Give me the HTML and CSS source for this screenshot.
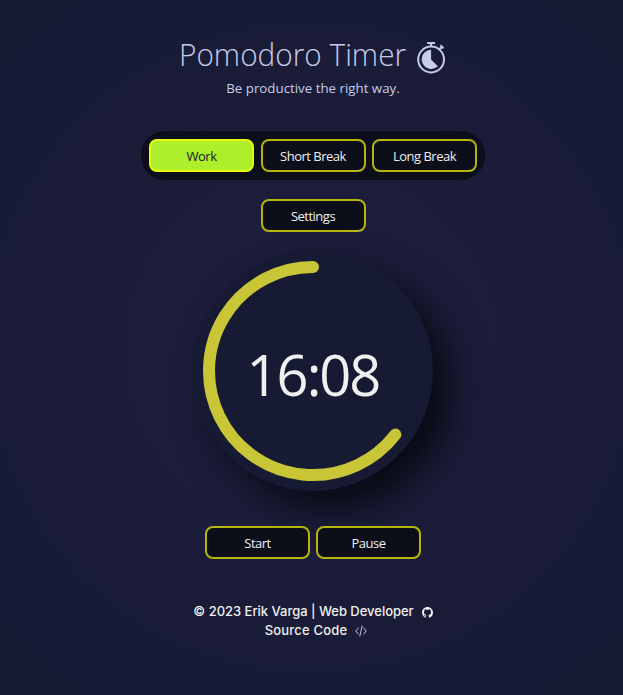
FILE: index.html
```html
<!DOCTYPE html>
<html lang="en">
<head>
<meta charset="utf-8">
<title>Pomodoro Timer</title>
<link rel="stylesheet" href="styles.css">
</head>
<body>
<main class="app">
  <header class="header">
    <h1 class="title"><span class="title-text">Pomodoro Timer</span>
      <svg class="stopwatch" width="29" height="33" viewBox="0 0 29 33">
        <circle cx="14.1" cy="18.5" r="12.9" fill="none" stroke="currentColor" stroke-width="2"/>
        <path d="M14.1 18.5V8.7A9.6 9.6 0 1 0 20.9 25.3Z" fill="currentColor"/>
        <path d="M10.2 2h7.8M14.1 2v4M22.6 8.3l2.5-2.5M23.4 4.2l3 3" fill="none" stroke="currentColor" stroke-width="2"/>
      </svg>
    </h1>
    <p class="subtitle">Be productive the right way.</p>
  </header>
  <nav class="modes">
    <button class="btn active">Work</button>
    <button class="btn">Short Break</button>
    <button class="btn">Long Break</button>
  </nav>
  <button class="btn settings">Settings</button>
  <section class="dial">
    <svg class="ring" width="240" height="240" viewBox="0 0 240 240">
      <path d="M120 16A104 104 0 1 0 202.3 183.6" fill="none" stroke="#c8c537" stroke-width="12" stroke-linecap="round"/>
    </svg>
    <span class="time">16:08</span>
  </section>
  <div class="controls">
    <button class="btn">Start</button>
    <button class="btn">Pause</button>
  </div>
  <footer class="footer">
    <div class="line"><span class="credit">© 2023 Erik Varga | Web Developer</span>
      <svg class="github" width="11" height="11" viewBox="0 0 16 16"><path fill="currentColor" d="M8 0C3.58 0 0 3.58 0 8c0 3.54 2.29 6.53 5.47 7.59.4.07.55-.17.55-.38 0-.19-.01-.82-.01-1.49-2.01.37-2.53-.49-2.69-.94-.09-.23-.48-.94-.82-1.13-.28-.15-.68-.52-.01-.53.63-.01 1.08.58 1.23.82.72 1.21 1.87.87 2.33.66.07-.52.28-.87.51-1.07-1.78-.2-3.64-.89-3.64-3.95 0-.87.31-1.59.82-2.15-.08-.2-.36-1.02.08-2.12 0 0 .67-.21 2.2.82a7.6 7.6 0 0 1 4 0c1.53-1.04 2.2-.82 2.2-.82.44 1.1.16 1.92.08 2.12.51.56.82 1.27.82 2.15 0 3.07-1.87 3.75-3.65 3.95.29.25.54.73.54 1.48 0 1.07-.01 1.93-.01 2.2 0 .21.15.46.55.38A8 8 0 0 0 16 8c0-4.42-3.58-8-8-8Z"/></svg>
    </div>
    <div class="line"><span class="source">Source Code</span>
      <svg class="code" width="12" height="12" viewBox="0 0 12 12"><path d="M3.3 3 .7 6l2.6 3M8.7 3l2.6 3-2.6 3M7.2 1 4.8 11" fill="none" stroke="currentColor" stroke-width=".95" stroke-linecap="round"/></svg>
    </div>
  </footer>
</main>
</body>
</html>
```
FILE: styles.css
```css
* { box-sizing: border-box; }
body {
  margin: 0;
  height: 695px;
  overflow: hidden;
  background: radial-gradient(circle at center, #1f1f3f 0%, #161a33 100%);
  font-family: "Open Sans", "Noto Sans", sans-serif;
  color: #f0f0f0;
}
.app {
  display: flex;
  flex-direction: column;
  align-items: center;
  padding: 34px 0 0 3px;
}
.header {
  display: flex;
  flex-direction: column;
  align-items: center;
  height: 97px;
  color: #c8cbea;
}
.title {
  display: flex;
  align-items: flex-start;
  gap: 11px;
  height: 40px;
  margin: 0;
  font-size: 32px;
  font-weight: 300;
  line-height: 40px;
  white-space: nowrap;
}
.title-text {
  width: 226px;
  margin-left: -1px;
  margin-right: 1px;
  transform: scaleX(.93);
  transform-origin: left;
}
.stopwatch { margin-top: 7px; }
.subtitle {
  margin: 4px 0 0;
  font-size: 13.3px;
  line-height: 20px;
  white-space: nowrap;
}
.modes {
  display: flex;
  gap: 6.5px;
  padding: 8px;
  border-radius: 24px;
  background: #0c0e1a;
}
.btn {
  width: 105px;
  height: 33px;
  padding: 2px 0 0;
  border: 2px solid #b5b50a;
  border-radius: 8px;
  background: #0c0e1a;
  color: #f0f0f0;
  font: 400 13px/27px "Open Sans", "Noto Sans", sans-serif;
  letter-spacing: -.5px;
  white-space: nowrap;
}
.btn.active {
  border-color: #e5ff0a;
  background: #adef2b;
  color: #161a33;
}
.settings { margin-top: 19px; }
.dial {
  display: grid;
  place-items: center;
  width: 240px;
  height: 240px;
  margin-top: 19px;
  border-radius: 50%;
  background: #161a33;
  box-shadow: 18px 18px 36px #080a12;
}
.ring, .time { grid-area: 1 / 1; }
.time {
  padding-top: 5px;
  font-size: 56px;
  line-height: 70px;
  letter-spacing: -2px;
}
.controls { display: flex; gap: 6px; margin-top: 35px; }
.footer {
  display: flex;
  flex-direction: column;
  align-items: center;
  margin-top: 42px;
  font-family: Inter, "Open Sans", sans-serif;
  font-size: 13px;
  font-weight: 500;
}
.line {
  display: flex;
  align-items: center;
  height: 19px;
  gap: 8px;
  white-space: nowrap;
}
.credit { letter-spacing: -.02px; }
.source { letter-spacing: .2px; }
.line + .line { padding-left: 6px; }
.github { margin-top: 4px; }
.code { margin-top: 3px; color: #c8cbea; }
```
